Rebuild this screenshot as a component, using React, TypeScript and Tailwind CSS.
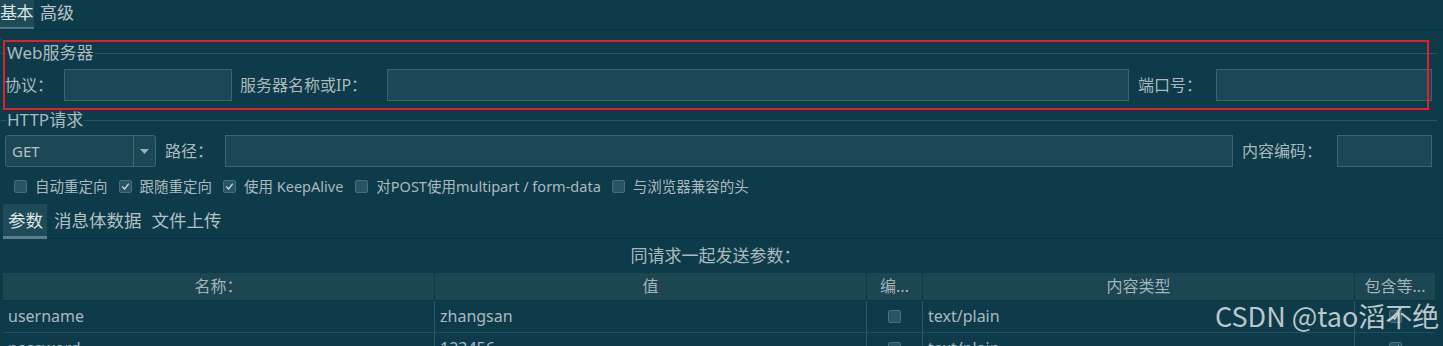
import React from "react";

const FONT = { fontFamily: '"Noto Sans", "Noto Sans CJK SC", sans-serif' };

function Check({ checked }: { checked?: boolean }) {
  return (
    <span className="w-[13px] h-[13px] shrink-0 rounded-[2px] border border-[#47707d] bg-[#2b5462] flex items-center justify-center">
      {checked && (
        <svg width="9" height="9" viewBox="0 0 9 9">
          <path d="M1.2 4.6 L3.6 7 L7.8 1.6" fill="none" stroke="#c9d4d7" strokeWidth="1.4" />
        </svg>
      )}
    </span>
  );
}

function FieldsetTitle({ title }: { title: string }) {
  return (
    <div className="flex items-center h-[20px] pl-[1px] pr-[6px]">
      <div className="w-[5px] h-px bg-[#2c5664]" />
      <div className="px-[1px] text-[17px] leading-[20px] text-[#aab9be]">{title}</div>
      <div className="flex-1 h-px bg-[#2c5664]" />
    </div>
  );
}

const inputCls = "h-[32px] border border-[#3b6471] bg-[#1c4754]";

export default function App() {
  return (
    <div className="relative w-[1443px] h-[346px] overflow-hidden bg-[#0e3b4a] text-[#aab9be]" style={FONT}>
      {/* top tabs */}
      <div className="flex h-[30px] border-b border-[#0a3140]">
        <div className="w-[34px] h-[29px] bg-[#1f4a57] border-b-[2px] border-[#4f7683] text-[17px] leading-[26px] text-[#dbe3e5] tracking-[-0.5px]">
          基本
        </div>
        <div className="pl-[6px] text-[17px] leading-[26px] text-[#b8c4c8]">高级</div>
      </div>

      {/* Web服务器 */}
      <div className="mt-[13px]">
        <FieldsetTitle title="Web服务器" />
      </div>
      <div className="mt-[6px] flex items-center pl-[5px] pr-[11px] text-[16px]">
        <div className="w-[59px] leading-[20px]">协议：</div>
        <div className={`${inputCls} w-[168px]`} />
        <div className="w-[147px] ml-[8px] leading-[20px]">服务器名称或IP：</div>
        <div className={`${inputCls} flex-1`} />
        <div className="w-[78px] ml-[9px] leading-[20px]">端口号：</div>
        <div className={`${inputCls} w-[216px]`} />
      </div>

      {/* HTTP请求 */}
      <div className="mt-[9px]">
        <FieldsetTitle title="HTTP请求" />
      </div>
      <div className="mt-[5px] flex items-center pl-[5px] pr-[11px] text-[16px]">
        <div className="w-[151px] h-[32px] rounded-[3px] border border-[#3d6673] bg-[#1c4754] flex">
          <div className="w-[128px] border-r border-[#3d6673] pl-[6px] leading-[30px] text-[15px] text-[#b3c0c4]">GET</div>
          <div className="flex-1 flex items-center justify-center">
            <svg width="9" height="5" viewBox="0 0 9 5">
              <path d="M0 0 H9 L4.5 5 Z" fill="#9fb0b6" />
            </svg>
          </div>
        </div>
        <div className="w-[60px] ml-[9px] leading-[20px]">路径：</div>
        <div className={`${inputCls} flex-1`} />
        <div className="w-[95px] ml-[9px] leading-[20px]">内容编码：</div>
        <div className={`${inputCls} w-[95px]`} />
      </div>

      {/* checkboxes */}
      <div className="mt-[10px] h-[18px] flex items-center pl-[14px] text-[14.5px] leading-[18px] text-[#aab9be]">
        <Check />
        <span className="ml-[8px]">自动重定向</span>
        <span className="ml-[11px]"><Check checked /></span>
        <span className="ml-[8px]">跟随重定向</span>
        <span className="ml-[11px]"><Check checked /></span>
        <span className="ml-[8px]">使用 KeepAlive</span>
        <span className="ml-[12px]"><Check /></span>
        <span className="ml-[8px]">对POST使用multipart / form-data</span>
        <span className="ml-[11px]"><Check /></span>
        <span className="ml-[8px]">与浏览器兼容的头</span>
      </div>

      {/* sub tabs */}
      <div className="mt-[9px] flex h-[35px] border-b border-[#0a3140] pl-[3px] text-[17.5px]">
        <div className="w-[44px] h-[35px] bg-[#1f4a57] border-b-[3px] border-[#5b7f8b] pl-[5px] leading-[32px] text-[#dfe6e8]">参数</div>
        <div className="pl-[7px] leading-[32px] text-[#b3c0c4]">消息体数据</div>
        <div className="pl-[10px] leading-[32px] text-[#b3c0c4]">文件上传</div>
      </div>

      {/* caption */}
      <div className="h-[34px] pt-[7px] text-center text-[17px] leading-[20px] text-[#aab9be] pr-[12px]">
        同请求一起发送参数：
      </div>

      {/* table */}
      <div className="ml-[3px] w-[1432px] text-[16px]">
        <div className="grid grid-cols-[432px_432px_56px_432px_80px] h-[28px] bg-[#1b4652] border-b border-[#0b3341] text-[#a3b4ba]">
          <div className="border-r border-[#0f3947] text-center leading-[27px]">名称：</div>
          <div className="border-r border-[#0f3947] text-center leading-[27px]">值</div>
          <div className="border-r border-[#0f3947] text-center leading-[27px]">编...</div>
          <div className="border-r border-[#0f3947] text-center leading-[27px]">内容类型</div>
          <div className="text-center leading-[27px]">包含等...</div>
        </div>
        {[
          { n: "username", v: "zhangsan", inc: true },
          { n: "password", v: "123456", inc: true },
        ].map((r) => (
          <div key={r.n} className="grid grid-cols-[432px_432px_56px_432px_80px] h-[32px] border-b border-[#24505e] text-[#aab9be]">
            <div className="border-r border-[#2a5564] pl-[5px] leading-[31px]">{r.n}</div>
            <div className="border-r border-[#2a5564] pl-[5px] leading-[31px]">{r.v}</div>
            <div className="border-r border-[#2a5564] flex items-center justify-center"><Check /></div>
            <div className="border-r border-[#2a5564] pl-[5px] leading-[31px]">text/plain</div>
            <div className="flex items-center justify-center"><Check checked={r.inc} /></div>
          </div>
        ))}
      </div>

      {/* watermark */}
      <div className="absolute left-[1215px] top-[298px] text-[27px] leading-[36px] text-[#cfd6d9] opacity-90 whitespace-nowrap" style={{ fontFamily: '"Noto Sans CJK SC", sans-serif' }}>
        CSDN @tao滔不绝
      </div>

      {/* red annotation box */}
      <div className="absolute left-[3px] top-[40px] w-[1426px] h-[70px] border-2 border-[#e3202a] pointer-events-none" />
    </div>
  );
}
